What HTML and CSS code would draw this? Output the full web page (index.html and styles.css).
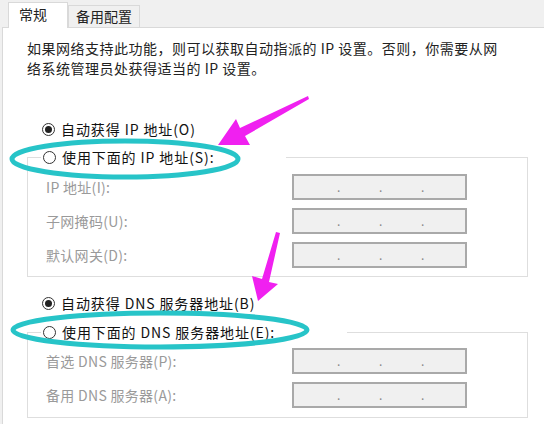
FILE: index.html
```html
<!DOCTYPE html>
<html lang="zh-CN">
<head>
    <meta charset="UTF-8">
    <title>Internet 协议版本 4 (TCP/IPv4) 属性</title>
    <link rel="stylesheet" href="styles.css">
</head>
<body>

<div class="tabs">
    <div class="tab active">常规</div>
    <div class="tab">备用配置</div>
</div>

<div class="panel">
    <p class="intro">如果网络支持此功能，则可以获取自动指派的 IP 设置。否则，你需要从网<br>络系统管理员处获得适当的 IP 设置。</p>

    <div class="radio-row first">
        <span class="radio checked"></span>自动获得 IP 地址(O)
    </div>
    <fieldset class="group">
        <legend class="radio-row"><span class="radio"></span>使用下面的 IP 地址(S):</legend>
        <div class="field-row">
            <span class="label">IP 地址(I):</span>
            <span class="ip-box"><i>.</i><i>.</i><i>.</i></span>
        </div>
        <div class="field-row">
            <span class="label">子网掩码(U):</span>
            <span class="ip-box"><i>.</i><i>.</i><i>.</i></span>
        </div>
        <div class="field-row">
            <span class="label">默认网关(D):</span>
            <span class="ip-box"><i>.</i><i>.</i><i>.</i></span>
        </div>
    </fieldset>

    <div class="radio-row second">
        <span class="radio checked"></span>自动获得 DNS 服务器地址(B)
    </div>
    <fieldset class="group dns">
        <legend class="radio-row"><span class="radio"></span>使用下面的 DNS 服务器地址(E):</legend>
        <div class="field-row">
            <span class="label">首选 DNS 服务器(P):</span>
            <span class="ip-box"><i>.</i><i>.</i><i>.</i></span>
        </div>
        <div class="field-row">
            <span class="label">备用 DNS 服务器(A):</span>
            <span class="ip-box"><i>.</i><i>.</i><i>.</i></span>
        </div>
    </fieldset>
</div>

<!-- annotation marks drawn over the screenshot -->
<svg class="marks" width="544" height="424" viewBox="0 0 544 424">
    <ellipse cx="125" cy="159" rx="113" ry="18" fill="none" stroke="#27c4c8" stroke-width="5"/>
    <ellipse cx="160" cy="330" rx="147" ry="17" fill="none" stroke="#27c4c8" stroke-width="5"/>
    <polygon fill="#f020f0" points="218,145 236,119 240,128 308,96 309,99 245,136 250,145"/>
    <polygon fill="#f020f0" points="258,301 252,276 262,279 276,232 280,233 269,282 278,284"/>
</svg>

</body>
</html>
```

FILE: styles.css
```css
body {
    margin: 0;
    padding: 0;
    width: 544px;
    height: 424px;
    overflow: hidden;
    position: relative;
    background-color: #f0f0f0;
    font-family: "Noto Sans CJK SC", "Noto Sans", sans-serif;
    font-size: 14px;
    color: #222;
}

.tabs {
    display: flex;
    align-items: flex-end;
    height: 27px;
    padding-left: 8px;
    box-sizing: border-box;
}

.tab {
    height: 21px;
    padding: 0 7px;
    line-height: 21px;
    background-color: #f0f0f0;
    border: 1px solid #d9d9d9;
    border-bottom: none;
    color: #222;
}

.tab.active {
    width: 60px;
    height: 26px;
    padding: 0 10px;
    box-sizing: border-box;
    line-height: 22px;
    background-color: #fff;
    margin-bottom: -1px;
    position: relative;
    z-index: 1;
}

.panel {
    margin-left: 2px;
    height: 397px;
    background-color: #fff;
    border-top: 1px solid #d9d9d9;
    border-left: 1px solid #d9d9d9;
    padding-left: 24px;
    box-sizing: border-box;
}

.intro {
    margin: 0;
    padding-top: 10px;
    line-height: 20px;
    letter-spacing: 0.5px;
    color: #222;
}

.radio-row {
    display: flex;
    align-items: center;
    height: 20px;
    color: #111;
    letter-spacing: 0.9px;
}

.radio-row.first {
    margin-top: 41px;
    margin-left: 15px;
}

.radio-row.second {
    margin-top: 16px;
    margin-left: 15px;
}

.radio {
    width: 13px;
    height: 13px;
    border: 1px solid #333;
    border-radius: 50%;
    box-sizing: border-box;
    margin-right: 6px;
    display: flex;
    align-items: center;
    justify-content: center;
}

.radio.checked::after {
    content: "";
    width: 7px;
    height: 7px;
    border-radius: 50%;
    background-color: #222;
}

.group {
    width: 501px;
    margin: 8px 0 0 0;
    padding: 7px 0 8px 0;
    border: 1px solid #dedede;
    box-sizing: border-box;
    display: flex;
    flex-direction: column;
    gap: 8px;
}

.group.dns {
    margin-top: 9px;
    padding-top: 6px;
    padding-bottom: 9px;
}

.group legend {
    margin-left: 13px;
    padding: 0 72px 0 2px;
}

.field-row {
    display: flex;
    align-items: center;
    height: 26px;
    padding-left: 18px;
}

.label {
    width: 246px;
    color: #9a9a9a;
    letter-spacing: 0.3px;
}

.ip-box {
    width: 175px;
    height: 26px;
    box-sizing: border-box;
    border: 2px solid #a9a9a9;
    background-color: #f0f0f0;
    display: flex;
    align-items: center;
    padding-left: 43px;
    gap: 38px;
}

.ip-box i {
    font-style: normal;
    width: 4px;
    line-height: 14px;
    color: #888;
    font-size: 12px;
}

.marks {
    position: absolute;
    left: 0;
    top: 0;
    pointer-events: none;
}
```
